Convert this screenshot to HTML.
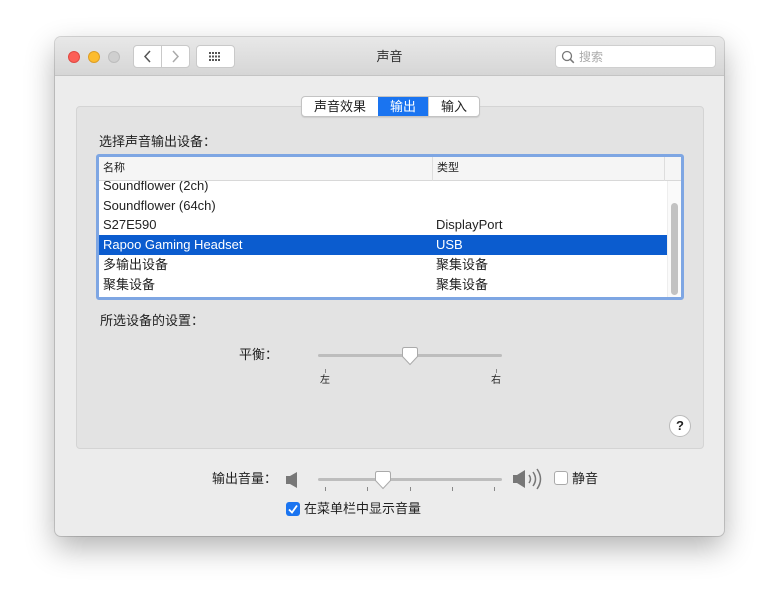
<!DOCTYPE html><html><head><meta charset="utf-8"><style>
*{box-sizing:border-box;margin:0;padding:0}
body{width:780px;height:610px;background:#fff;font-family:"Liberation Sans","Noto Sans CJK SC",sans-serif;font-size:13px;line-height:16px;color:#222;position:relative;overflow:hidden}
.win{position:absolute;left:55px;top:37px;width:669px;height:499px;background:#ececec;border-radius:6px;box-shadow:0 12px 30px rgba(0,0,0,.3),0 0 0 1px rgba(0,0,0,.15);overflow:hidden}
.tb{height:39px;background:linear-gradient(#e8e8e8,#d6d6d6);border-bottom:1px solid #c4c4c4;position:relative}
.dot{position:absolute;top:14px;width:12px;height:12px;border-radius:50%}
.btn{position:absolute;top:8px;height:23px;background:#fff;border:1px solid #c9c9c9;border-radius:4px}
.abs{position:absolute}
.panel{position:absolute;left:21px;top:69px;width:628px;height:343px;background:#e3e3e3;border:1px solid #d4d4d4;border-radius:4px}
.tabs{position:absolute;left:246px;top:59px;height:21px;display:flex;border:1px solid #c3c3c3;border-radius:4px;background:#fff;overflow:hidden;box-shadow:0 1px 1px rgba(0,0,0,.1)}
.tabs div{padding:0 12px;line-height:19px;font-size:13px}
.tbl{position:absolute;left:41px;top:117px;width:588px;height:146px;border:3px solid #7ea6e3;border-radius:3px;background:#fff;overflow:hidden}
.row{position:absolute;left:0;height:20px;line-height:20px;width:568px;font-size:13px}
.row span{position:absolute;left:4px}
.row b{font-weight:normal;position:absolute;left:337px}
.tick{position:absolute;width:1px;height:4px;background:#888}
</style></head><body>
<div class="win">
 <div class="tb">
  <div class="dot" style="left:13px;background:#fc5f57;border:1px solid #df4942"></div>
  <div class="dot" style="left:33px;background:#fdbc2e;border:1px solid #dd9e26"></div>
  <div class="dot" style="left:53px;background:#cfcfcf;border:1px solid #bdbdbd"></div>
  <div class="btn" style="left:78px;width:29px;border-radius:4px 0 0 4px"><svg width="27" height="21"><path d="M16 5l-5 5.5 5 5.5" fill="none" stroke="#555" stroke-width="1.5"/></svg></div>
  <div class="btn" style="left:106px;width:29px;border-radius:0 4px 4px 0"><svg width="27" height="21"><path d="M11 5l5 5.5-5 5.5" fill="none" stroke="#aaa" stroke-width="1.5"/></svg></div>
  <div class="btn" style="left:141px;width:39px"><svg width="37" height="21"><g fill="#555"><rect x="12" y="6" width="2" height="2"/><rect x="15" y="6" width="2" height="2"/><rect x="18" y="6" width="2" height="2"/><rect x="21" y="6" width="2" height="2"/><rect x="12" y="9.5" width="2" height="2"/><rect x="15" y="9.5" width="2" height="2"/><rect x="18" y="9.5" width="2" height="2"/><rect x="21" y="9.5" width="2" height="2"/><rect x="12" y="13" width="2" height="2"/><rect x="15" y="13" width="2" height="2"/><rect x="18" y="13" width="2" height="2"/><rect x="21" y="13" width="2" height="2"/></g></svg></div>
  <div class="abs" style="left:0;width:669px;top:12px;text-align:center;font-size:13px;color:#333">声音</div>
  <div class="btn" style="left:500px;width:161px;top:8px;height:23px;border-color:#cfcfcf"><svg class="abs" style="left:5px;top:4px" width="14" height="14"><circle cx="6" cy="6" r="4.5" fill="none" stroke="#777" stroke-width="1.3"/><path d="M9.3 9.3l3.5 3.5" stroke="#777" stroke-width="1.5"/></svg><span class="abs" style="left:23px;top:3px;color:#aaa;font-size:12px">搜索</span></div>
 </div>
 <div class="panel"></div>
 <div class="tabs"><div>声音效果</div><div style="background:#1a74f0;color:#fff">输出</div><div style="border-left:1px solid #ccc">输入</div></div>
 <div class="abs" style="left:44px;top:97px;font-size:13px">选择声音输出设备：</div>
 <div class="tbl">
  <div class="abs" style="left:0;top:0;width:582px;height:24px;background:#f5f5f5;border-bottom:1px solid #d8d8d8;font-size:11px;line-height:22px"><span class="abs" style="left:4px">名称</span><span class="abs" style="left:333px;top:0;height:24px;border-left:1px solid #ddd;padding-left:4px">类型</span><span class="abs" style="left:565px;top:0;height:24px;border-left:1px solid #ddd"></span></div>
  <div class="row" style="top:19px;clip-path:inset(5px 0 0 0)"><span>Soundflower (2ch)</span></div>
  <div class="row" style="top:39px"><span>Soundflower (64ch)</span></div>
  <div class="row" style="top:58px"><span>S27E590</span><b>DisplayPort</b></div>
  <div class="row" style="top:78px;background:#0b5ccf;color:#fff"><span>Rapoo Gaming Headset</span><b>USB</b></div>
  <div class="row" style="top:98px"><span>多输出设备</span><b>聚集设备</b></div>
  <div class="row" style="top:118px"><span>聚集设备</span><b>聚集设备</b></div>
  <div class="abs" style="left:568px;top:24px;width:14px;height:116px;background:#fafafa;border-left:1px solid #eee"></div>
  <div class="abs" style="left:572px;top:46px;width:7px;height:92px;background:#c2c2c2;border-radius:4px"></div>
 </div>
 <div class="abs" style="left:45px;top:276px">所选设备的设置：</div>
 <div class="abs" style="left:184px;top:310px">平衡：</div>
 <div class="abs" style="left:263px;top:317px;width:184px;height:3px;background:#bdbdbd;border-radius:2px"></div>
 <svg class="abs" style="left:346px;top:310px" width="18" height="20"><path d="M1.5 2.5q0-2 2-2h11q2 0 2 2v7l-7.5 8-7.5-8z" fill="#fff" stroke="#aaa"/></svg>
 <div class="tick" style="left:270px;top:332px"></div><div class="tick" style="left:441px;top:332px"></div>
 <div class="abs" style="left:265px;top:336px;font-size:10px">左</div><div class="abs" style="left:436px;top:336px;font-size:10px">右</div>
 <div class="abs" style="left:614px;top:378px;width:22px;height:22px;border-radius:50%;background:#fff;border:1px solid #bbb;text-align:center;line-height:20px;font-weight:bold;font-size:13px">?</div>
 <div class="abs" style="left:157px;top:434px">输出音量：</div>
 <svg class="abs" style="left:230px;top:434px" width="14" height="18"><path d="M1 5h4l7-4v16l-7-4H1z" fill="#777"/></svg>
 <div class="abs" style="left:263px;top:441px;width:184px;height:3px;background:#bdbdbd;border-radius:2px"></div>
 <svg class="abs" style="left:319px;top:434px" width="18" height="20"><path d="M1.5 2.5q0-2 2-2h11q2 0 2 2v7l-7.5 8-7.5-8z" fill="#fff" stroke="#aaa"/></svg>
 <div class="tick" style="left:270px;top:450px"></div><div class="tick" style="left:312px;top:450px"></div><div class="tick" style="left:355px;top:450px"></div><div class="tick" style="left:397px;top:450px"></div><div class="tick" style="left:439px;top:450px"></div>
 <svg class="abs" style="left:457px;top:430px" width="34" height="26"><path d="M1 8h4l8-5v18l-8-5H1z" fill="#777"/><path d="M17 8q3 4 0 8M21 5q5 7 0 14M25 2q7 10 0 20" fill="none" stroke="#777" stroke-width="1.5"/></svg>
 <div class="abs" style="left:499px;top:434px;width:14px;height:14px;background:#fff;border:1px solid #aaa;border-radius:3px"></div>
 <div class="abs" style="left:517px;top:434px">静音</div>
 <div class="abs" style="left:231px;top:465px;width:14px;height:14px;background:#1a74f0;border-radius:3px"><svg width="14" height="14"><path d="M3 7.5l3 3 5-7" fill="none" stroke="#fff" stroke-width="1.8"/></svg></div>
 <div class="abs" style="left:249px;top:464px">在菜单栏中显示音量</div>
</div>
</body></html>
